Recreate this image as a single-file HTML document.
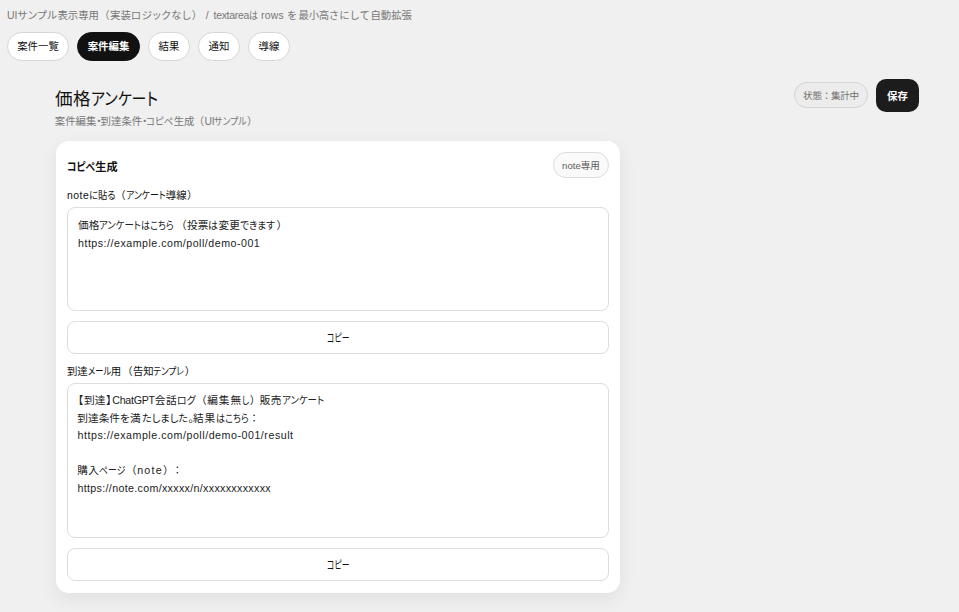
<!DOCTYPE html>
<html lang="ja">
<head>
<meta charset="utf-8">
<title>価格アンケート</title>
<style>
*{box-sizing:border-box;margin:0;padding:0}
html,body{width:959px;height:612px;overflow:hidden}
body{background:#f0f0f0;font-family:"Liberation Sans","Noto Sans CJK JP",sans-serif;color:#111;position:relative;font-size:10.4px}
.abs{position:absolute;white-space:nowrap}
.s{display:inline-block;white-space:pre;font-feature-settings:"palt"}
.g{display:inline-block}
.s.r{text-align:right}
.s.c{text-align:center}
.s.k{transform-origin:0 50%}
.top{font-size:10.4px;color:#777;line-height:14px}
.pill{height:29px;top:32px;border:1px solid #d6d6d6;border-radius:15px;background:#fff;font-size:10.4px;line-height:27px;text-align:center;color:#111}
.pill.on{background:#111;border-color:#111;color:#fff;font-weight:700}
.h1{font-size:17.6px;font-weight:400;line-height:24px;color:#111}
.sub{font-size:10.4px;line-height:14px;color:#777}
.status{left:794px;top:82px;width:74px;height:26px;border:1px solid #d4d4d4;border-radius:13px;background:#ececec;color:#707070;font-size:9.6px;line-height:26px;letter-spacing:-0.3px;text-align:center}
.save{left:876px;top:79px;width:43px;height:33px;border-radius:10px;background:#1c1c1c;color:#fff;font-weight:700;font-size:10.4px;line-height:35px;text-align:center}
.card{left:56px;top:141px;width:564px;height:452px;background:#fff;border-radius:13px;box-shadow:0 6.4px 19.2px rgba(0,0,0,.065)}
.ct{font-size:11.2px;font-weight:700;line-height:18px}
.badge{left:553px;top:152px;width:56px;height:26px;border:1px solid #ddd;border-radius:13px;background:#fafafa;color:#606060;font-size:9.6px;line-height:26px;text-align:center}
.lbl{font-size:10.4px;line-height:14px;color:#111}
.ta{left:67px;width:542px;border:1px solid #ddd;border-radius:8px;background:#fff;padding:8px 10px;font-size:10.67px;line-height:17.6px;color:#222}
.ln{height:17.6px;white-space:nowrap}
.btn{left:67px;width:542px;height:33px;border:1px solid #ddd;border-radius:8px;background:#fff;font-size:11.6px;line-height:32px;text-align:center;color:#111}
</style>
</head>
<body>
<div class="abs top" style="left:7px;top:8.5px"><span class="s" style="width:10.50px;letter-spacing:0.047px">UI</span><span class="s" style="width:40.00px;letter-spacing:0.500px">サンプル</span><span class="s" style="width:41.50px;letter-spacing:-0.016px">表示専用</span><span class="s r" style="width:11.00px;padding-right:0.8px">（</span><span class="s" style="width:21.00px;letter-spacing:0.109px">実装</span><span class="s" style="width:60.50px;letter-spacing:0.620px">ロジックなし</span><span class="s" style="width:10.50px;padding-left:0.7px">）</span><span class="s" style="width:11.50px;letter-spacing:0.943px"> / </span><span class="s" style="width:35.50px;letter-spacing:-0.256px">textarea</span><span class="s k" style="width:9.00px;transform:scaleX(0.8662)">は</span><span class="s" style="width:29.00px;letter-spacing:0.214px"> rows </span><span class="s" style="width:10.50px;letter-spacing:0.906px">を</span><span class="s" style="width:1.00px;letter-spacing:-1.891px"> </span><span class="s" style="width:30.50px;letter-spacing:-0.224px">最小高</span><span class="s" style="width:41.50px;letter-spacing:1.051px">さにして</span><span class="s" style="width:41.50px;letter-spacing:-0.016px">自動拡張</span></div>
<div class="abs pill" style="left:7px;width:62px">案件一覧</div>
<div class="abs pill on" style="left:77px;width:63px">案件編集</div>
<div class="abs pill" style="left:148px;width:42px">結果</div>
<div class="abs pill" style="left:198px;width:42px">通知</div>
<div class="abs pill" style="left:248px;width:42px">導線</div>
<h1 class="abs h1" style="left:55px;top:87px"><span class="s" style="width:36.00px;letter-spacing:0.398px">価格</span><span class="s k" style="width:67.00px;transform:scaleX(0.8518)">アンケート</span></h1>
<div class="abs sub" style="left:54.8px;top:114.5px"><span class="s" style="width:41.60px;letter-spacing:0.009px">案件編集</span><span class="s c" style="width:4.20px">・</span><span class="s" style="width:41.60px;letter-spacing:0.009px">到達条件</span><span class="s c" style="width:4.10px">・</span><span class="s k" style="width:27.40px;transform:scaleX(0.9095)">コピペ</span><span class="s" style="width:20.80px;letter-spacing:0.009px">生成</span><span class="s r" style="width:10.10px;padding-right:0.8px">（</span><span class="s" style="width:9.70px;letter-spacing:-0.353px">UI</span><span class="s k" style="width:32.50px;transform:scaleX(0.8553)">サンプル</span><span class="s" style="width:6.20px;padding-left:0.7px">）</span></div>
<div class="abs status">状態：集計中</div>
<div class="abs save">保存</div>
<div class="abs card"></div>
<div class="abs ct" style="left:67px;top:157.5px"><span class="s k" style="width:28.20px;transform:scaleX(0.8652)">コピペ</span><span class="s" style="width:22.40px;letter-spacing:0.005px">生成</span></div>
<div class="abs badge">note専用</div>
<div class="abs lbl" style="left:67px;top:189px"><span class="s" style="width:22.20px;letter-spacing:0.491px">note</span><span class="s k" style="width:26.60px;transform:scaleX(0.8951)">に貼る</span><span class="s r" style="width:10.40px;padding-right:0.8px">（</span><span class="s k" style="width:39.60px;transform:scaleX(0.8525)">アンケート</span><span class="s" style="width:20.80px;letter-spacing:0.009px">導線</span><span class="s" style="width:10.40px;padding-left:0.7px">）</span></div>
<div class="abs ta" style="top:207px;height:104px;padding-top:9px"><div class="ln" style="margin-left:0.00px"><span class="s" style="width:21.30px;letter-spacing:-0.014px">価格</span><span class="s k" style="width:42.00px;transform:scaleX(0.8816)">アンケート</span><span class="s k" style="width:32.70px;transform:scaleX(0.8490)">はこちら</span><span class="s r" style="width:13.00px;padding-right:0.8px">（</span><span class="s" style="width:21.50px;letter-spacing:0.086px">投票</span><span class="s k" style="width:10.00px;transform:scaleX(0.9370)">は</span><span class="s" style="width:21.50px;letter-spacing:0.086px">変更</span><span class="s k" style="width:35.00px;transform:scaleX(0.9061)">できます</span><span class="g" style="width:1.20px"></span><span class="s" style="width:9.80px;padding-left:0.7px">）</span></div><div class="ln" style="margin-left:0.00px"><span class="s" style="width:182.30px;letter-spacing:0.498px">https://example.com/poll/demo-001</span></div></div>
<div class="abs btn" style="top:321px"><span class="s k" style="width:22.40px;transform:scaleX(0.6740)">コピー</span></div>
<div class="abs lbl" style="left:67px;top:365px"><span class="s" style="width:20.60px;letter-spacing:-0.091px">到達</span><span class="s k" style="width:23.20px;transform:scaleX(0.7987)">メール</span><span class="s" style="width:10.70px;letter-spacing:0.309px">用</span><span class="s r" style="width:11.50px;padding-right:0.8px">（</span><span class="s" style="width:20.50px;letter-spacing:-0.141px">告知</span><span class="s k" style="width:31.00px;transform:scaleX(0.8364)">テンプレ</span><span class="s" style="width:10.50px;padding-left:0.7px">）</span></div>
<div class="abs ta" style="top:383px;height:155px;padding-top:8px"><div class="ln" style="margin-left:-5.00px"><span class="s r" style="width:11.00px;padding-right:0.8px">【</span><span class="s" style="width:21.50px;letter-spacing:0.086px">到達</span><span class="s" style="width:6.80px;padding-left:0.7px">】</span><span class="s" style="width:42.40px;letter-spacing:-0.289px">ChatGPT</span><span class="s" style="width:22.70px;letter-spacing:0.686px">会話</span><span class="s k" style="width:18.70px;transform:scaleX(0.9328)">ログ</span><span class="s r" style="width:11.10px;padding-right:0.8px">（</span><span class="s" style="width:35.10px;letter-spacing:1.039px">編集無</span><span class="s k" style="width:7.20px;transform:scaleX(0.7986)">し</span><span class="s" style="width:10.30px;padding-left:0.7px">）</span><span class="s" style="width:21.90px;letter-spacing:0.286px">販売</span><span class="s k" style="width:42.30px;transform:scaleX(0.8879)">アンケート</span></div><div class="ln" style="margin-left:-0.70px"><span class="s" style="width:42.70px;letter-spacing:0.015px">到達条件</span><span class="s" style="width:10.00px;letter-spacing:0.156px">を</span><span class="s" style="width:11.50px;letter-spacing:0.828px">満</span><span class="s k" style="width:46.10px;transform:scaleX(0.9570)">たしました</span><span class="s" style="width:5.40px;padding-left:0.7px">。</span><span class="s" style="width:23.00px;letter-spacing:0.836px">結果</span><span class="s k" style="width:32.70px;transform:scaleX(0.8490)">はこちら</span><span class="s c" style="width:10.80px">：</span></div><div class="ln" style="margin-left:-0.50px"><span class="s" style="width:216.10px;letter-spacing:0.531px">https://example.com/poll/demo-001/result</span></div><div class="ln">&nbsp;</div><div class="ln" style="margin-left:-0.70px"><span class="s" style="width:21.90px;letter-spacing:0.286px">購入</span><span class="s k" style="width:26.30px;transform:scaleX(0.8333)">ページ</span><span class="s r" style="width:11.70px;padding-right:0.8px">（</span><span class="s" style="width:25.60px;letter-spacing:1.213px">note</span><span class="s" style="width:9.20px;padding-left:0.7px">）</span><span class="s c" style="width:10.70px">：</span></div><div class="ln" style="margin-left:-0.50px"><span class="s" style="width:193.50px;letter-spacing:0.332px">https://note.com/xxxxx/n/xxxxxxxxxxxx</span></div></div>
<div class="abs btn" style="top:548px"><span class="s k" style="width:22.40px;transform:scaleX(0.6740)">コピー</span></div>
</body>
</html>
